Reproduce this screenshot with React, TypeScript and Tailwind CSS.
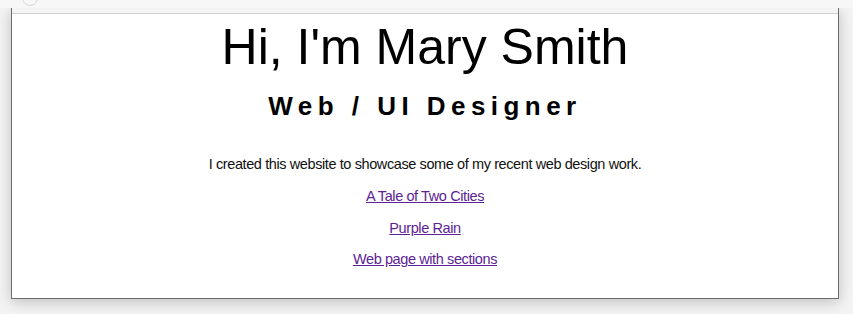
const links = ['A Tale of Two Cities', 'Purple Rain', 'Web page with sections'];

export default function App() {
  return (
    <div className="w-[853px] h-[314px] overflow-hidden bg-[#f4f4f4] font-['Liberation_Sans',Arial,sans-serif]">
      <div className="h-[8px] bg-[#f7f7f7] relative overflow-hidden">
        <div className="absolute left-[22px] top-[-10px] w-[16px] h-[16px] rounded-full border border-[#d8d8d8]" />
      </div>
      <div className="ml-[11px] w-[828px] h-[291px] border-x border-b border-[#6b6b6b] bg-white shadow-[0_3px_14px_rgba(0,0,0,0.22)] flex flex-col">
        <div className="h-[6px] bg-[#f4f4f4] border-b border-[#cfcfcf] shrink-0" />
        <div className="flex flex-col items-center text-black pt-[5px]">
          <h1 className="text-[50px] leading-[56px] font-normal">Hi, I'm Mary Smith</h1>
          <h2 className="mt-[15px] text-[26px] leading-[32px] font-bold tracking-[0.21em]">
            Web / UI Designer
          </h2>
          <p className="mt-[32px] text-[14.5px] leading-[20px] tracking-[-0.4px] text-[#111]">
            I created this website to showcase some of my recent web design work.
          </p>
          <ul className="mt-[12px] flex flex-col items-center gap-[11.5px]">
            {links.map((l) => (
              <li key={l} className="text-[14.5px] leading-[20px] tracking-[-0.4px]">
                <a href="#" className="text-[#5b2393] underline">
                  {l}
                </a>
              </li>
            ))}
          </ul>
        </div>
      </div>
    </div>
  );
}
